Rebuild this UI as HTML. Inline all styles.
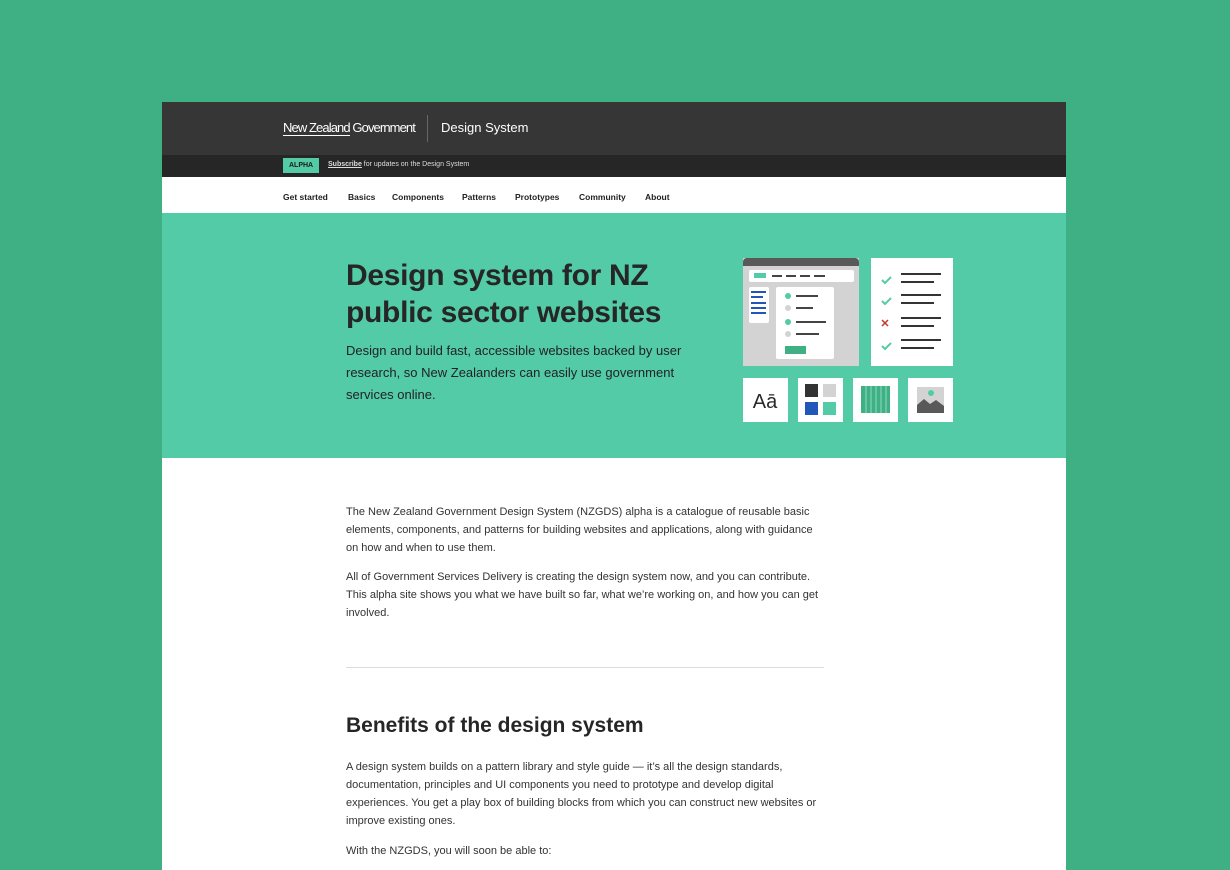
<!DOCTYPE html><html><head><meta charset="utf-8"><style>
*{margin:0;padding:0;box-sizing:border-box}
body{width:1230px;height:870px;background:#3eb084;font-family:"Liberation Sans",sans-serif;position:relative;overflow:hidden;color:#2a2a2a}
.page{position:absolute;left:162px;top:102px;width:904px;height:768px;background:#fff;overflow:hidden}
.hd{height:53px;background:#363636;position:relative}
.logo{position:absolute;left:121px;top:18px;color:#fff;font-size:13px;letter-spacing:-0.9px}
.logo u{text-decoration:none;border-bottom:1px solid #fff}
.sep{position:absolute;left:265px;top:13px;width:1px;height:27px;background:#666}
.ds{position:absolute;left:279px;top:18px;color:#fff;font-size:13px}
.al{height:22px;background:#262626;position:relative;font-size:7px;color:#ddd}
.badge{position:absolute;left:121px;top:3px;background:#52cba6;color:#1a1a1a;font-weight:bold;padding:2px 6px;font-size:7px;line-height:11px}
.al span.t{position:absolute;left:166px;top:6px}
.nav{height:36px;position:relative;font-size:8.5px;font-weight:bold;color:#222}
.nav span{position:absolute;top:15px}
.hero{height:245px;background:#52cba6;position:relative}
h1{position:absolute;left:184px;top:44px;font-size:30px;line-height:37px;font-weight:bold;color:#262626;width:360px;letter-spacing:-0.3px}
.lead{position:absolute;left:184px;top:127px;width:360px;font-size:13px;line-height:22px;color:#222}
.body{position:absolute;left:184px;width:480px;font-size:11px;line-height:18px;color:#333}
h2{position:absolute;left:184px;top:612px;font-size:21px;font-weight:bold;color:#262626}
.hr{position:absolute;left:184px;top:565px;width:478px;height:1px;background:#ddd}
</style></head><body>
<div class="page">
<div class="hd"><div class="logo"><u>New Zealand</u> Government</div><div class="sep"></div><div class="ds">Design System</div></div>
<div class="al"><div class="badge">ALPHA</div><span class="t"><b style="text-decoration:underline">Subscribe</b> for updates on the Design System</span></div>
<div class="nav"><span style="left:121px">Get started</span><span style="left:186px">Basics</span><span style="left:230px">Components</span><span style="left:300px">Patterns</span><span style="left:353px">Prototypes</span><span style="left:417px">Community</span><span style="left:483px">About</span></div>
<div class="hero">
<h1>Design system for NZ public sector websites</h1>
<div class="lead">Design and build fast, accessible websites backed by user research, so New Zealanders can easily use government services online.</div>
<svg style="position:absolute;left:0;top:0" width="904" height="245" viewBox="162 213 904 245">
<rect x="743" y="258" width="116" height="108" fill="#d3d3d3"/>
<path d="M743 266V262a4 4 0 0 1 4-4h108a4 4 0 0 1 4 4v4z" fill="#595959"/>
<rect x="749" y="270" width="105" height="12" rx="2" fill="#fff"/>
<rect x="754" y="273" width="12" height="5" fill="#52cba6"/>
<g stroke="#444" stroke-width="2"><path d="M772 276h10M786 276h10M800 276h10M814 276h11"/></g>
<rect x="749" y="287" width="20" height="36" rx="2" fill="#fff"/>
<g stroke="#2157b8" stroke-width="2"><path d="M751 292h15M751 297h12M751 303h15M751 308h15M751 313h15"/></g>
<rect x="776" y="287" width="58" height="72" rx="2" fill="#fff"/>
<circle cx="788" cy="296" r="3" fill="#52cba6"/><circle cx="788" cy="308" r="3" fill="#d3d3d3"/>
<circle cx="788" cy="322" r="3" fill="#52cba6"/><circle cx="788" cy="334" r="3" fill="#d3d3d3"/>
<g stroke="#444" stroke-width="2"><path d="M796 296h22M796 308h17M796 322h30M796 334h23"/></g>
<rect x="785" y="346" width="21" height="8" fill="#3eb084"/>
<rect x="871" y="258" width="82" height="108" fill="#fff"/>
<g stroke="#52cba6" stroke-width="2" fill="none"><path d="M882 280l3 3 6-6M882 301l3 3 6-6M882 346l3 3 6-6"/></g>
<path d="M882 320l6 6M888 320l-6 6" stroke="#c0392b" stroke-width="1.5"/>
<g stroke="#333" stroke-width="2"><path d="M901 274h40M901 282h33M901 295h40M901 303h33M901 318h40M901 326h33M901 340h40M901 348h33"/></g>
<rect x="743" y="378" width="45" height="44" fill="#fff"/>
<text x="765" y="408" font-family="Liberation Sans" font-size="20" text-anchor="middle" fill="#2a2a2a">Aā</text>
<rect x="798" y="378" width="45" height="44" fill="#fff"/>
<rect x="805" y="384" width="13" height="13" fill="#333"/><rect x="823" y="384" width="13" height="13" fill="#d3d3d3"/>
<rect x="805" y="402" width="13" height="13" fill="#2157b8"/><rect x="823" y="402" width="13" height="13" fill="#52cba6"/>
<rect x="853" y="378" width="45" height="44" fill="#fff"/>
<rect x="861" y="386" width="29" height="27" fill="#3eb084"/>
<g stroke="#8fdcc2" stroke-width="1"><path d="M866 386v27M871 386v27M876 386v27M881 386v27M886 386v27"/></g>
<rect x="908" y="378" width="45" height="44" fill="#fff"/>
<rect x="917" y="387" width="27" height="26" fill="#d3d3d3"/>
<path d="M917 413v-8l7-6 6 5 6-4 8 6v7z" fill="#595959"/>
<circle cx="931" cy="393" r="3" fill="#52cba6"/>
</svg>
</div>
<div class="body" style="top:401px">The New Zealand Government Design System (NZGDS) alpha is a catalogue of reusable basic elements, components, and patterns for building websites and applications, along with guidance on how and when to use them.</div>
<div class="body" style="top:466px">All of Government Services Delivery is creating the design system now, and you can contribute. This alpha site shows you what we have built so far, what we’re working on, and how you can get involved.</div>
<div class="hr"></div>
<h2>Benefits of the design system</h2>
<div class="body" style="top:656px">A design system builds on a pattern library and style guide — it’s all the design standards, documentation, principles and UI components you need to prototype and develop digital experiences. You get a play box of building blocks from which you can construct new websites or improve existing ones.</div>
<div class="body" style="top:740px">With the NZGDS, you will soon be able to:</div>
</div>
</body></html>
